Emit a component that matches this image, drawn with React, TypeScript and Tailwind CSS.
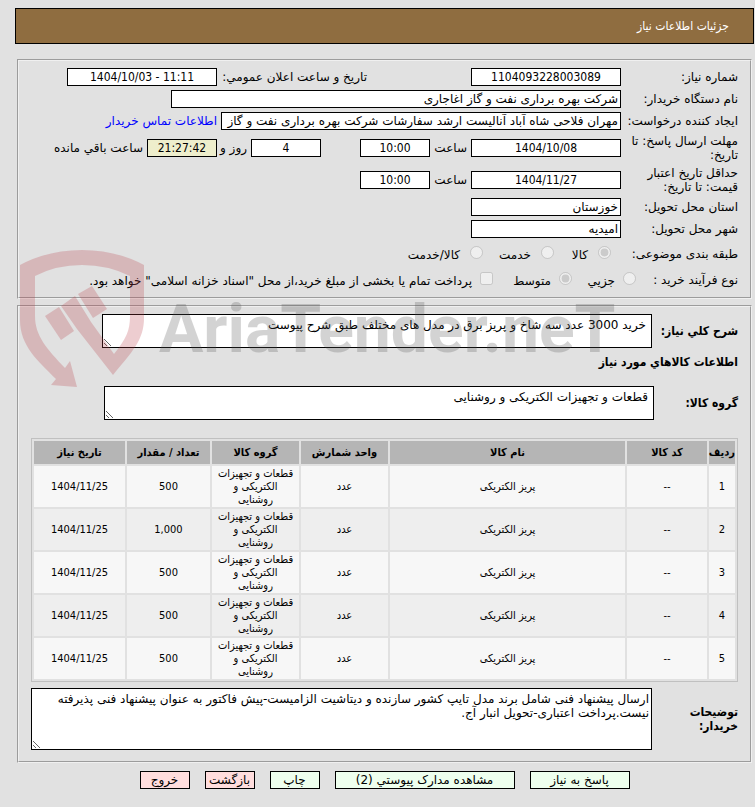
import type { ReactNode } from 'react';
import clsx from 'clsx';

const items = [
  { id: 1, qty: '500' },
  { id: 2, qty: '1,000' },
  { id: 3, qty: '500' },
  { id: 4, qty: '500' },
  { id: 5, qty: '500' },
];

const columns = [
  { title: 'ردیف', width: 'w-[26px]' },
  { title: 'کد کالا', width: 'w-[80px]' },
  { title: 'نام کالا', width: '' },
  { title: 'واحد شمارش', width: 'w-[87px]' },
  { title: 'گروه کالا', width: 'w-[87px]' },
  { title: 'تعداد / مقدار', width: 'w-[83px]' },
  { title: 'تاریخ نیاز', width: 'w-[91px]' },
];

const actions = [
  { title: 'پاسخ به نیاز', style: 'w-[100px] bg-[#eeffee]' },
  { title: 'مشاهده مدارک پیوستي (2)', style: 'w-[180px] bg-[#eeffee]' },
  { title: 'چاپ', style: 'w-[50px] bg-[#eeffee]' },
  { title: 'بازگشت', style: 'w-[50px] bg-[#ffdddd]' },
  { title: 'خروج', style: 'w-[50px] bg-[#ffdddd]' },
];

function Row({ label, htmlFor, className = 'h-[22px]', children }: {
  label: ReactNode;
  htmlFor?: string;
  className?: string;
  children: ReactNode;
}) {
  return (
    <div className={clsx('flex items-center', className)}>
      <label htmlFor={htmlFor} className="w-[117px] shrink-0 whitespace-nowrap">
        {label}
      </label>
      {children}
    </div>
  );
}

function Field({ id, value, className, center, label }: {
  id?: string;
  value: string;
  className: string;
  center?: boolean;
  label?: string;
}) {
  return (
    <input
      id={id}
      aria-label={label}
      readOnly
      dir={center ? 'ltr' : 'rtl'}
      value={value}
      className={clsx(
        'h-[18px] shrink-0 border border-black px-0.5',
        center && "text-center [font-family:'DejaVu_Sans_Condensed','DejaVu_Sans',sans-serif]",
        className,
      )}
    />
  );
}

function Option({ id, name, type = 'radio', checked, className, children }: {
  id: string;
  name: string;
  type?: string;
  checked?: boolean;
  className: string;
  children: ReactNode;
}) {
  return (
    <div className={clsx('flex shrink-0 items-start', className)}>
      <input id={id} name={name} type={type} defaultChecked={checked} disabled className="size-[13px] shrink-0" />
      <label htmlFor={id} className="whitespace-nowrap pt-0.5">{children}</label>
    </div>
  );
}

function Watermark() {
  return (
    <svg
      className="pointer-events-none absolute left-5 top-[248px]"
      width="600"
      height="142"
      viewBox="20 248 600 142"
      aria-hidden="true"
    >
      <g fill="#b93c46" opacity="0.25">
        <path d="M20 265Q48 250 82 250Q116 250 144 265V318C144 340 132 352 113 375L77 329L61 306L75 296L91 322L114 354C126 339 130 331 130 316V276Q108 265 82 265Q56 265 35 276V316C35 336 47 349 65 368L70 361L77 387L51 385L56 379C38 361 20 346 20 320Z" />
        <path d="M45 316L59 307L74 331L61 340Z" />
        <path d="M78 294L92 286L107 309L93 318Z" />
      </g>
      <text
        x="159"
        y="352"
        fill="#555555"
        opacity="0.25"
        direction="ltr"
        className="text-[66px] font-bold [font-family:Roboto,'Liberation_Sans',sans-serif]"
      >
        AriaTender.neT
      </text>
    </svg>
  );
}

export default function App() {
  return (
    <div
      dir="rtl"
      className="relative min-h-screen bg-[#e1e1e1] pb-4 pl-[15px] pr-px pt-2 text-[12px] leading-[14px] text-black [font-family:'DejaVu_Sans',sans-serif] [&_input]:bg-white [&_textarea]:bg-white"
    >
      <header className="flex h-9 items-center border border-black bg-[#8f6d40] px-6 text-white">
        <h1 className="[font-family:'DejaVu_Sans_Condensed','DejaVu_Sans',sans-serif]">جزئیات اطلاعات نیاز</h1>
      </header>

      <main className="mx-0.5 mt-[15px]">
        <fieldset className="min-w-0 border-2 border-[#f0f0f0] px-3 py-[5px] [border-style:groove]">
          <Row label="شماره نیاز:" htmlFor="need-no">
            <Field id="need-no" center value="1104093228003089" className="w-[150px]" />
            <label htmlFor="announce" className="mr-[104px] w-[150px] shrink-0 whitespace-nowrap">
              تاریخ و ساعت اعلان عمومي:
            </label>
            <Field id="announce" center value="1404/10/03 - 11:11" className="w-[150px]" />
          </Row>
          <Row label="نام دستگاه خریدار:" htmlFor="buyer">
            <Field id="buyer" value="شرکت بهره برداری نفت و گاز اغاجاری" className="w-[450px]" />
          </Row>
          <Row label="ایجاد کننده درخواست:" htmlFor="creator">
            <Field
              id="creator"
              value="مهران فلاحی شاه آباد آنالیست ارشد سفارشات شرکت بهره برداری نفت و گاز اغاجاری"
              className="w-[400px]"
            />
            <a href="#contact" className="mr-1 whitespace-nowrap text-[#0000ff]">اطلاعات تماس خریدار</a>
          </Row>
          <Row label={<>مهلت ارسال پاسخ: تا<br />تاریخ:</>} htmlFor="deadline" className="h-8">
            <Field id="deadline" center value="1404/10/08" className="w-[150px]" />
            <label htmlFor="deadline-hour" className="w-[41px] pr-1">ساعت</label>
            <Field id="deadline-hour" center value="10:00" className="w-[70px]" />
            <Field label="روز" center value="4" className="mr-[39px] w-[70px]" />
            <span className="w-[34px] whitespace-nowrap pr-1">روز و</span>
            <Field id="remaining" center value="21:27:42" className="w-[70px] bg-[#eeeecc]!" />
            <label htmlFor="remaining" className="whitespace-nowrap pr-1">ساعت باقي مانده</label>
          </Row>
          <Row label={<>حداقل تاریخ اعتبار<br />قیمت: تا تاریخ:</>} htmlFor="validity" className="h-8">
            <Field id="validity" center value="1404/11/27" className="w-[150px]" />
            <label htmlFor="validity-hour" className="w-[41px] pr-1">ساعت</label>
            <Field id="validity-hour" center value="10:00" className="w-[70px]" />
          </Row>
          <Row label="استان محل تحویل:" htmlFor="province">
            <Field id="province" value="خوزستان" className="w-[150px]" />
          </Row>
          <Row label="شهر محل تحویل:" htmlFor="city">
            <Field id="city" value="امیدیه" className="w-[150px]" />
          </Row>
          <div className="flex h-[27px] items-center">
            <span className="w-[127px] shrink-0">طبقه بندی موضوعی:</span>
            <Option id="goods" name="category" checked className="w-[57px] gap-2.5">کالا</Option>
            <Option id="service" name="category" className="w-[71px] gap-2.5">خدمت</Option>
            <Option id="both" name="category" className="gap-2.5">کالا/خدمت</Option>
          </div>
          <div className="flex h-[25px] items-center">
            <span className="w-[102px] shrink-0">نوع فرآیند خرید :</span>
            <Option id="small" name="process" className="w-[64px] gap-2">جزیي</Option>
            <Option id="medium" name="process" checked className="w-[79px] gap-2">متوسط</Option>
            <Option id="treasury" name="treasury" type="checkbox" className="gap-2">
              پرداخت تمام یا بخشی از مبلغ خرید،از محل "اسناد خزانه اسلامی" خواهد بود.
            </Option>
          </div>
        </fieldset>

        <fieldset className="mt-1.5 min-w-0 border-2 border-[#f0f0f0] px-3 pb-[11px] pt-[7px] [border-style:groove] [&_:is(label,h2,table)]:[font-family:'DejaVu_Sans_Condensed','DejaVu_Sans',sans-serif]">
          <div className="flex items-center">
            <label htmlFor="summary" className="w-[86px] shrink-0 font-bold">شرح کلي نیاز:</label>
            <textarea
              id="summary"
              readOnly
              className="block h-[34px] w-[550px] resize border border-black px-[5px] py-[3px]"
              defaultValue="خرید 3000 عدد سه شاخ و پریز برق در مدل های مختلف طبق شرح پیوست"
            />
          </div>
          <h2 className="mt-[7px] font-bold">اطلاعات کالاهاي مورد نیاز</h2>
          <div className="mt-[17px] flex items-center">
            <label htmlFor="group" className="w-[84px] shrink-0 font-bold">گروه کالا:</label>
            <textarea
              id="group"
              readOnly
              className="block h-[34px] w-[550px] resize border border-black px-[5px] py-[3px]"
              defaultValue="قطعات و تجهیزات الکتریکی و روشنایی"
            />
          </div>

          <table className="mt-[18px] w-full table-fixed border-separate border-spacing-0.5 border border-[#c0c0c0] text-center text-[11px] leading-[13px]">
            <thead>
              <tr className="h-[23px]">
                {columns.map((column) => (
                  <th key={column.title} className={clsx('whitespace-nowrap bg-[#b5b5b5] p-0', column.width)}>
                    {column.title}
                  </th>
                ))}
              </tr>
            </thead>
            <tbody>
              {items.map((item) => (
                <tr key={item.id} className="h-[41px] odd:bg-[#f7f7f7] even:bg-[#eeeeee]">
                  <td className="p-px">{item.id}</td>
                  <td className="p-px">--</td>
                  <td className="p-px">پریز الکتریکی</td>
                  <td className="p-px">عدد</td>
                  <td className="px-1 py-px">قطعات و تجهیزات الکتریکی و روشنایی</td>
                  <td className="p-px">{item.qty}</td>
                  <td className="p-px">1404/11/25</td>
                </tr>
              ))}
            </tbody>
          </table>

          <div className="mt-1.5 flex items-center">
            <label htmlFor="notes" className="w-[86px] shrink-0 font-bold">توضیحات<br />خریدار:</label>
            <textarea
              id="notes"
              readOnly
              className="block h-[62px] min-w-0 flex-1 resize border border-black px-0.5 py-[3px]"
              defaultValue="ارسال پیشنهاد فنی شامل برند مدل تایپ کشور سازنده و دیتاشیت الزامیست-پیش فاکتور به عنوان پیشنهاد فنی پذیرفته نیست.پرداخت اعتباری-تحویل انبار آج."
            />
          </div>
        </fieldset>

        <div className="mt-2 flex justify-center gap-[15px]">
          {actions.map((action) => (
            <button
              key={action.title}
              type="button"
              className={clsx('h-[18px] whitespace-nowrap border border-black', action.style)}
            >
              {action.title}
            </button>
          ))}
        </div>
      </main>

      <Watermark />
    </div>
  );
}
